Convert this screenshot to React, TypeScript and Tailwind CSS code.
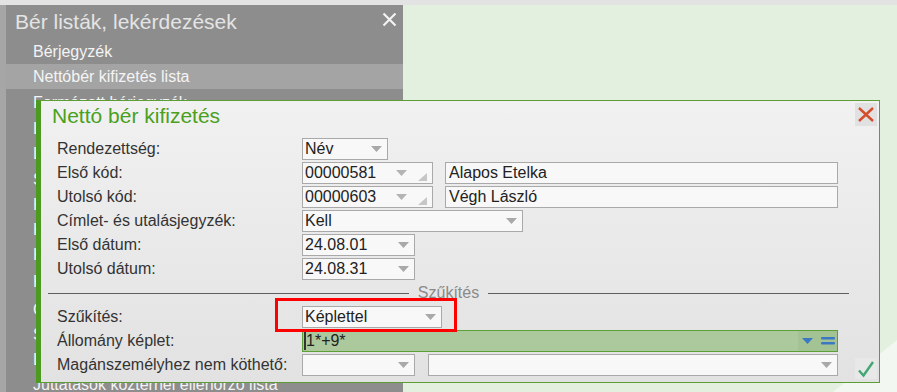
import { FunctionComponent, ReactNode } from "react";

const Arrow: FunctionComponent<{ color?: string }> = ({ color = "#a9a9a9" }) => (
  <svg width="11" height="6" viewBox="0 0 11 6" className="shrink-0">
    <path d="M0 0h11L5.5 6z" fill={color} />
  </svg>
);

const Corner = () => (
  <svg width="9" height="8" viewBox="0 0 9 8" className="shrink-0">
    <path d="M9 0v8H0z" fill="#c6c6c6" />
  </svg>
);

const Select: FunctionComponent<{ value?: string; className: string }> = ({
  value,
  className,
}) => (
  <div
    className={`flex h-[22px] shrink-0 items-center border border-[#a9a9a9] bg-[#f8f8f8] pl-[2px] pr-[5px] ${className}`}
  >
    <span className="flex-1 truncate text-[16px] leading-none text-[#222]">
      {value}
    </span>
    <Arrow />
  </div>
);

const CodeField: FunctionComponent<{ value: string }> = ({ value }) => (
  <div className="flex h-[22px] w-[131px] shrink-0 items-center border border-[#a9a9a9] bg-[#f8f8f8] pl-[2px] pr-[5px]">
    <span className="flex-1 text-[16px] leading-none text-[#222]">{value}</span>
    <Arrow color="#b4b4b4" />
    <span className="ml-[11px] flex h-full items-end pb-[2px]">
      <Corner />
    </span>
  </div>
);

const TextField: FunctionComponent<{ value: string }> = ({ value }) => (
  <div className="ml-[12px] flex h-[22px] w-[393px] items-center border border-[#a9a9a9] bg-[#f8f8f8] pl-[3px]">
    <span className="text-[16px] leading-none text-[#222]">{value}</span>
  </div>
);

const Row: FunctionComponent<{ label: string; children?: ReactNode }> = ({
  label,
  children,
}) => (
  <div className="flex h-[24px] items-center">
    <div className="w-[245px] shrink-0 text-[16px] leading-none text-[#333]">
      {label}
    </div>
    {children}
  </div>
);

const menuItems: { label: string; className: string }[] = [
  { label: "Bérjegyzék", className: "h-[25px] bg-[#8d8d8d]" },
  { label: "Nettóbér kifizetés lista", className: "h-[25px] bg-[#a4a4a4]" },
  { label: "Formázott bérjegyzék", className: "h-[27px] bg-[#8d8d8d]" },
  { label: "Levonások listája", className: "h-[25px] bg-[#8d8d8d]" },
  { label: "Letiltások listája", className: "h-[26px] bg-[#8d8d8d]" },
  { label: "Statisztikai lista", className: "h-[25px] bg-[#8d8d8d]" },
  { label: "Költséghely lista", className: "h-[25px] bg-[#8d8d8d]" },
  { label: "Kifizetési lista", className: "h-[25px] bg-[#8d8d8d]" },
  { label: "Könyvelési feladás", className: "h-[25px] bg-[#8d8d8d]" },
  { label: "Kilépők listája", className: "h-[30px] bg-[#8d8d8d]" },
  { label: "Cafeteria lista", className: "h-[25px] bg-[#8d8d8d]" },
  { label: "Szabadság nyilvántartás", className: "h-[25px] bg-[#8d8d8d]" },
  { label: "Levonás összesítő", className: "h-[25px] bg-[#8d8d8d]" },
  { label: "Juttatások közterhei ellenőrző lista", className: "h-[25px] bg-[#8d8d8d]" },
];

const Sidebar = () => (
  <aside className="h-[387px] w-[403px] shrink-0 bg-[#a6a6a6] pl-[6px]">
    <div className="flex h-[34px] items-start justify-between bg-[#8d8d8d] pl-[9px] pr-[6px]">
      <span className="text-[21px] leading-[34px] text-[#e4e4e4]">
        Bér listák, lekérdezések
      </span>
      <svg width="15" height="15" viewBox="0 0 15 15" className="mt-[7px]">
        <path d="M1.5 1.5l12 12M13.5 1.5l-12 12" stroke="#f2f2f2" strokeWidth="2.2" />
      </svg>
    </div>
    {menuItems.map((item) => (
      <div
        key={item.label}
        className={`flex items-center pl-[27px] text-[16px] leading-none text-[#f4f4f4] ${item.className}`}
      >
        {item.label}
      </div>
    ))}
  </aside>
);

const Dialog = () => (
  <div className="absolute left-[36px] top-[100px] h-[283px] w-[844px] border border-l-[5px] border-[#5a9e34] border-l-[#4c9a1f] bg-gradient-to-b from-[#f1f1f1] to-[#e2e2e2]">
    <div className="flex h-[36px] items-start justify-between pl-[11px] pr-[2px]">
      <h2 className="mt-[3px] text-[21px] leading-[24px] text-[#4aa020]">
        Nettó bér kifizetés
      </h2>
      <button className="mt-[2px] flex h-[23px] w-[22px] items-center justify-center bg-[#e1e1e1]">
        <svg width="22" height="23" viewBox="0 0 22 23">
          <path d="M4 5l14 13M18 5L4 18" stroke="#d54d2c" strokeWidth="2.4" />
        </svg>
      </button>
    </div>

    <div className="pl-[16px]">
      <Row label="Rendezettség:">
        <Select value="Név" className="w-[86px]" />
      </Row>
      <Row label="Első kód:">
        <CodeField value="00000581" />
        <TextField value="Alapos Etelka" />
      </Row>
      <Row label="Utolsó kód:">
        <CodeField value="00000603" />
        <TextField value="Végh László" />
      </Row>
      <Row label="Címlet- és utalásjegyzék:">
        <Select value="Kell" className="w-[221px]" />
      </Row>
      <Row label="Első dátum:">
        <Select value="24.08.01" className="w-[113px]" />
      </Row>
      <Row label="Utolsó dátum:">
        <Select value="24.08.31" className="w-[113px]" />
      </Row>
    </div>

    <div className="ml-[7px] mr-[30px] flex h-[24px] items-center gap-[9px]">
      <div className="h-px flex-1 bg-[#5f5f5f]" />
      <span className="text-[16px] leading-none text-[#8a8a8a]">Szűkítés</span>
      <div className="h-px flex-1 bg-[#5f5f5f]" />
    </div>

    <div className="pl-[16px]">
      <Row label="Szűkítés:">
        <div className="relative">
          <Select value="Képlettel" className="w-[140px]" />
          <div className="absolute left-[-27px] top-[-8px] h-[34px] w-[182px] border-[3px] border-[#ff0000]" />
        </div>
      </Row>
      <Row label="Állomány képlet:">
        <div className="flex h-[22px] w-[536px] items-center border border-[#5c9f36] bg-[#acc99d]">
          <span className="ml-[1px] h-[18px] w-[2px] bg-[#333]" />
          <span className="flex-1 text-[16px] leading-none text-[#222]">1*+9*</span>
          <div className="flex h-full w-[39px] items-center gap-[8px] bg-[#a4c395] pl-[4px]">
            <Arrow color="#3b78c1" />
            <svg width="14" height="8" viewBox="0 0 14 8">
              <rect x="0" y="0" width="14" height="2.6" rx="1" fill="#3b78c1" />
              <rect x="0" y="5" width="14" height="2.6" rx="1" fill="#3b78c1" />
            </svg>
          </div>
        </div>
      </Row>
      <div className="flex h-[24px] items-center">
        <div className="w-[245px] shrink-0 text-[16px] leading-none text-[#333]">
          Magánszemélyhez nem köthető:
        </div>
        <Select className="w-[113px]" />
        <Select className="ml-[13px] w-[410px]" />
        <button className="ml-auto mr-[2px] mt-[6px] flex h-[21px] w-[22px] items-center justify-center bg-[#e8e8e8]">
          <svg width="22" height="21" viewBox="0 0 22 21">
            <path d="M4 12.5l4.5 5L18 4" fill="none" stroke="#43a774" strokeWidth="2.4" />
          </svg>
        </button>
      </div>
    </div>
  </div>
);

export default function App() {
  return (
    <div className="relative h-[392px] w-[897px] overflow-hidden bg-[#e4f0df] font-['Liberation_Sans',Arial,sans-serif]">
      <svg
        className="absolute bottom-0 right-0"
        width="70"
        height="60"
        viewBox="0 0 70 60"
      >
        <polygon points="6,60 70,8 70,60" fill="#f3f7f1" />
      </svg>
      <div className="relative h-[5px] bg-[#e3e3e3]" />
      <div className="relative flex">
        <Sidebar />
      </div>
      <Dialog />
    </div>
  );
}
